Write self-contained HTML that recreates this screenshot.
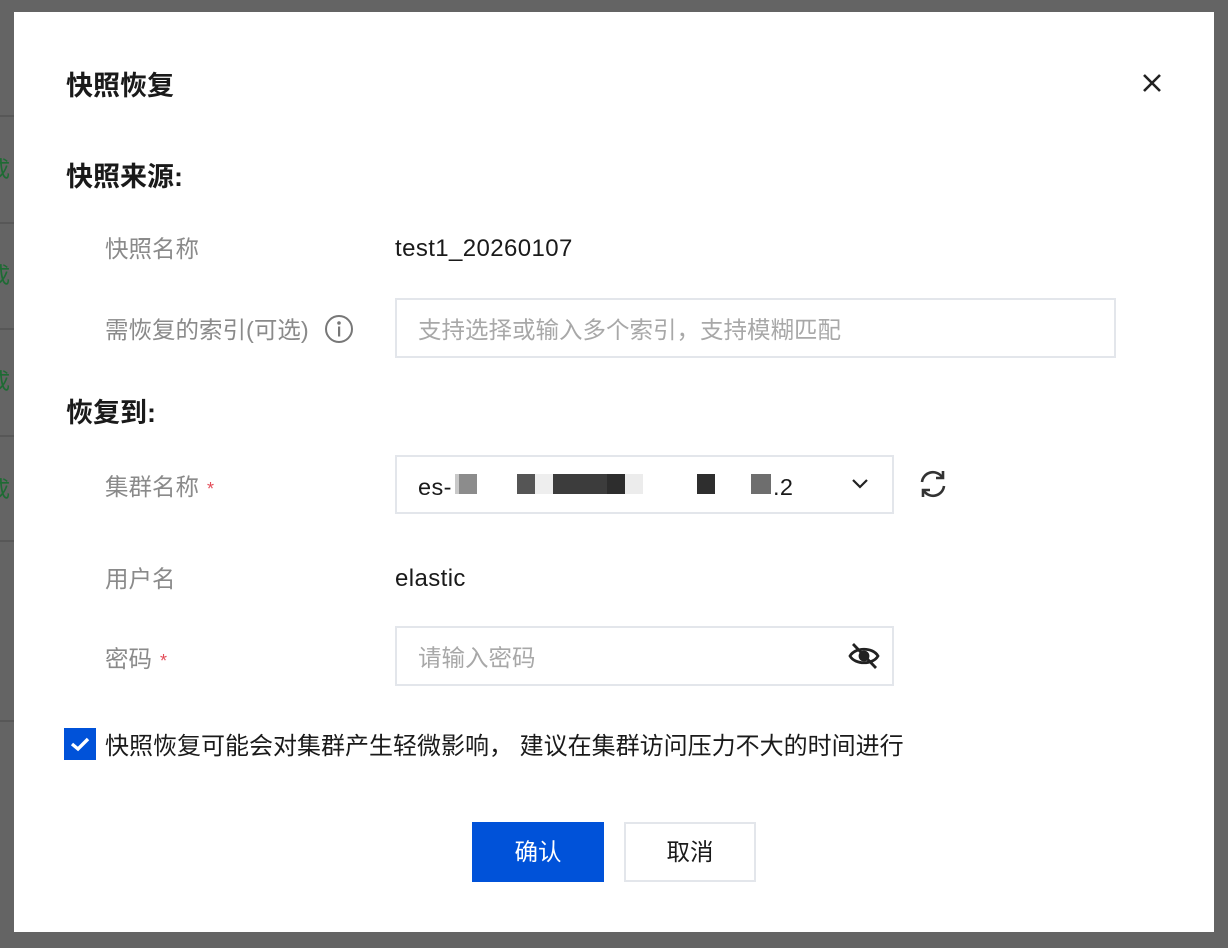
<!DOCTYPE html>
<html><head><meta charset="utf-8"><style>
*{box-sizing:border-box;margin:0;padding:0}
body{width:1228px;height:948px;background:#646464;position:relative;overflow:hidden;font-family:"Liberation Sans","Noto Sans CJK SC",sans-serif;}
.bl{position:absolute;left:0;width:14px;height:2px;background:#575757}
.g{position:absolute;left:-12px;color:#1d6b33;font-size:22px}
.modal{position:absolute;left:14px;top:12px;width:1200px;height:920px;background:#fff}
.a{position:absolute;white-space:nowrap;line-height:28px}
.h{font-size:27px;font-weight:bold;color:#1a1a1a;line-height:30px}
.lab{font-size:23.5px;color:#8a8a8a}
.val{font-size:23.5px;color:#1a1a1a}
.lat{font-size:24px;letter-spacing:0.4px}
.inp{position:absolute;border:2px solid #e3e6eb;background:#fff}
.ph{font-size:23.5px;color:#a8a8a8;position:absolute;left:21px;top:2px;line-height:56px;white-space:nowrap}
.star{color:#e34d59;font-size:18px;margin-left:8px}
.blk{position:absolute;top:17px;height:20px}
</style></head><body>
<div class="bl" style="top:115px"></div><div class="bl" style="top:222px"></div><div class="bl" style="top:328px"></div><div class="bl" style="top:435px"></div><div class="bl" style="top:540px"></div><div class="bl" style="top:720px"></div>
<div class="g a" style="top:156px">成</div><div class="g a" style="top:262px">成</div><div class="g a" style="top:368px">成</div><div class="g a" style="top:476px">成</div>
<div class="modal">
<div class="a h" style="left:52px;top:59px">快照恢复</div>
<svg class="a" style="left:1128px;top:61px" width="20" height="20" viewBox="0 0 20 20"><path d="M2 2L18 18M18 2L2 18" stroke="#222" stroke-width="2.6"/></svg>
<div class="a h" style="left:52px;top:150px">快照来源:</div>
<div class="a lab" style="left:91px;top:223px">快照名称</div>
<div class="a val lat" style="left:381px;top:223px">test1_20260107</div>
<div class="a lab" style="left:91px;top:304px">需恢复的索引(可选)</div>
<svg class="a" style="left:310px;top:302px" width="30" height="30" viewBox="0 0 30 30"><circle cx="15" cy="15" r="13" fill="none" stroke="#777" stroke-width="2"/><circle cx="15" cy="9" r="1.8" fill="#777"/><rect x="14" y="12.5" width="2.2" height="10" fill="#777"/></svg>
<div class="inp" style="left:381px;top:286px;width:721px;height:60px"><span class="ph">支持选择或输入多个索引，支持模糊匹配</span></div>
<div class="a h" style="left:52px;top:386px">恢复到:</div>
<div class="a lab" style="left:91px;top:461px">集群名称<span class="star">*</span></div>
<div class="inp" style="left:381px;top:443px;width:499px;height:59px">
<span class="ph lat" style="color:#1a1a1a">es-</span>
<div class="blk" style="left:58px;width:4px;background:#c8c8c8"></div>
<div class="blk" style="left:62px;width:18px;background:#8c8c8c"></div>
<div class="blk" style="left:120px;width:18px;background:#555"></div>
<div class="blk" style="left:138px;width:18px;background:#eee"></div>
<div class="blk" style="left:156px;width:54px;background:#3c3c3c"></div>
<div class="blk" style="left:210px;width:18px;background:#2d2d2d"></div>
<div class="blk" style="left:228px;width:18px;background:#ececec"></div>
<div class="blk" style="left:300px;width:18px;background:#2e2e2e"></div>
<div class="blk" style="left:354px;width:20px;background:#6e6e6e"></div>
<span class="ph lat" style="color:#1a1a1a;left:376px">.2</span>
<svg style="position:absolute;left:454px;top:21px" width="18" height="12" viewBox="0 0 18 12"><path d="M2 2L9 9L16 2" fill="none" stroke="#222" stroke-width="2.2"/></svg>
</div>
<svg class="a" style="left:903px;top:456px" width="32" height="32" viewBox="0 0 32 32" fill="none" stroke="#333" stroke-width="2.6"><path d="M5 14A11 11 0 0 1 25 9"/><path d="M26 3V10H19"/><path d="M27 18A11 11 0 0 1 7 23"/><path d="M6 29V22H13"/></svg>
<div class="a lab" style="left:91px;top:553px">用户名</div>
<div class="a val lat" style="left:381px;top:553px">elastic</div>
<div class="a lab" style="left:91px;top:633px">密码<span class="star">*</span></div>
<div class="inp" style="left:381px;top:614px;width:499px;height:60px"><span class="ph">请输入密码</span>
<svg style="position:absolute;left:450px;top:13px" width="34" height="30" viewBox="0 0 34 30" fill="none" stroke="#222" stroke-width="2.8"><path d="M3 15C8 6 26 6 31 15C26 24 8 24 3 15Z"/><circle cx="17" cy="15" r="4" fill="#222"/><path d="M6 3L29 27"/></svg></div>
<div class="a" style="left:50px;top:716px;width:32px;height:32px;background:#0052d9"><svg width="32" height="32" viewBox="0 0 32 32" style="display:block"><path d="M8 16L14 21L24 11" fill="none" stroke="#fff" stroke-width="3.4"/></svg></div>
<div class="a val" style="left:91px;top:721px;font-size:24px">快照恢复可能会对集群产生轻微影响， 建议在集群访问压力不大的时间进行</div>
<div class="a" style="left:458px;top:810px;width:132px;height:60px;background:#0052d9;color:#fff;font-size:23.5px;text-align:center;line-height:60px">确认</div>
<div class="a" style="left:610px;top:810px;width:132px;height:60px;border:2px solid #e3e6eb;color:#1a1a1a;font-size:23.5px;text-align:center;line-height:56px">取消</div>
</div>
</body></html>
